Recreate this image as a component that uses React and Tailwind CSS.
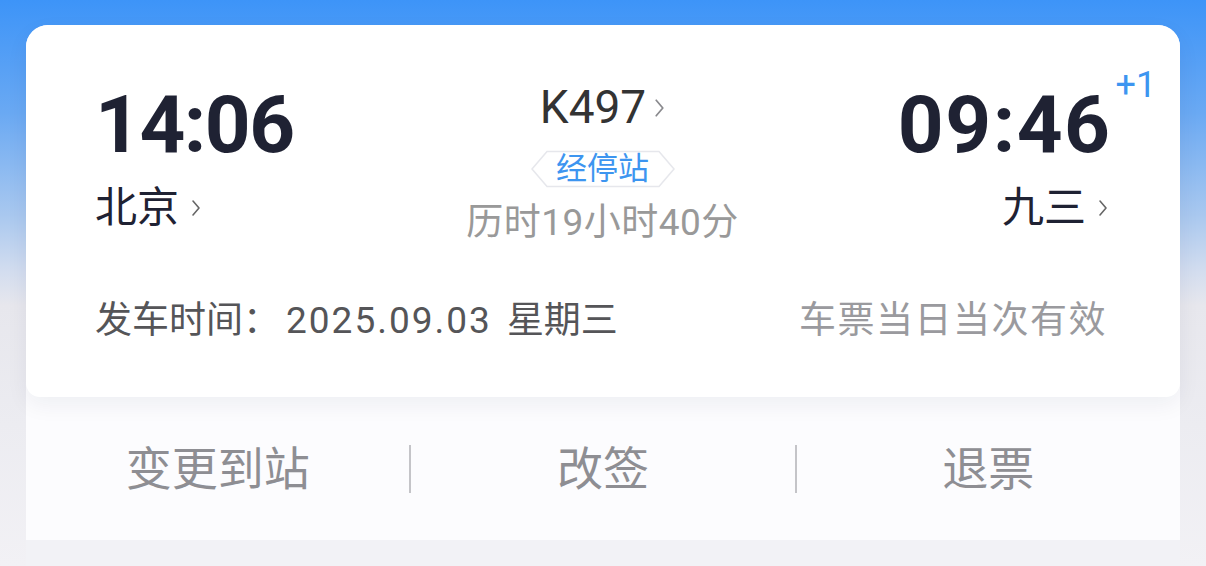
import React from "react";

const Chevron = ({ className = "" }) => (
  <svg viewBox="0 0 10 18" className={className} fill="none">
    <polyline points="2,2 8,9 2,16" stroke="currentColor" strokeWidth="1.6" strokeLinecap="round" strokeLinejoin="round" />
  </svg>
);

const Badge = () => (
  <div className="relative w-[146px] h-[38px] flex items-center justify-center">
    <svg viewBox="0 0 146 38" className="absolute inset-0 w-full h-full">
      <polygon points="17,1.5 129,1.5 144,19 129,36.5 17,36.5 2,19" fill="#ffffff" stroke="#e6e7ec" strokeWidth="1.5" />
    </svg>
    <span className="relative text-[31px] leading-[38px] text-[#3d95f0]">经停站</span>
  </div>
);

export default function App() {
  const font = { fontFamily: 'Roboto, "Noto Sans CJK SC", sans-serif' };
  return (
    <div
      className="w-[1206px] h-[566px] overflow-hidden px-[26px] pt-[25px] bg-[linear-gradient(180deg,#3d94f8_0%,#6aa9f3_20%,#a9c8ef_38%,#d3ddef_48%,#e7e7ed_54%,#ececf1_75%,#f2f1f5_100%)]"
      style={font}
    >
      <div className="rounded-t-[22px] bg-[#fcfcfe]">
        {/* Ticket card */}
        <div className="relative z-10 rounded-t-[22px] rounded-b-[14px] bg-white shadow-[0_8px_22px_rgba(20,30,60,0.06)] pl-[69px] pr-[70px] pt-[60px] pb-[58px]">
          <div className="grid grid-cols-[1fr_auto_1fr] items-start">
            {/* Left */}
            <div className="flex flex-col items-start">
              <div className="text-[80px] leading-[80px] font-bold text-[#1f2233] tracking-[-1.5px]">14:06</div>
              <div className="mt-[22px] flex items-center text-[42px] leading-[42px] text-[#1f2233]">
                <span>北京</span>
                <Chevron className="ml-[12px] w-[10px] h-[18px] text-[#666]" />
              </div>
            </div>
            {/* Center */}
            <div className="flex flex-col items-center">
              <div className="flex items-center text-[46px] leading-[45px] text-[#333333]">
                <span>K497</span>
                <Chevron className="ml-[8px] w-[11px] h-[20px] text-[#8a8a8e]" />
              </div>
              <div className="mt-[20px]">
                <Badge />
              </div>
              <div className="mt-[17px] text-[37px] leading-[36px] text-[#999999] tracking-[0.5px]">历时19小时40分</div>
            </div>
            {/* Right */}
            <div className="flex flex-col items-end">
              <div className="relative text-[80px] leading-[80px] font-bold text-[#1f2233] tracking-[1.5px] mr-[-1.5px]">
                09:46
                <span className="absolute left-full top-[-18px] ml-[4px] text-[36px] leading-[36px] font-normal tracking-normal text-[#3d95f0]">+1</span>
              </div>
              <div className="mt-[22px] flex items-center text-[42px] leading-[42px] text-[#1f2233] mr-[2px]">
                <span>九三</span>
                <Chevron className="ml-[12px] w-[10px] h-[18px] text-[#666]" />
              </div>
            </div>
          </div>
          <div className="mt-[62px] flex items-center justify-between text-[37px] leading-[36px]">
            <div className="flex items-center text-[#555558]">
              <span>发车时间：</span>
              <span className="ml-[6px] tracking-[2px]">2025.09.03</span>
              <span className="ml-[15px]">星期三</span>
            </div>
            <div className="text-[#9a9a9e] tracking-[1.5px] mr-[3px]">车票当日当次有效</div>
          </div>
        </div>
        {/* Actions */}
        <div className="h-[143px] flex items-center text-[46px] leading-[48px] text-[#8e8e93]">
          <div className="flex-1 text-center">变更到站</div>
          <div className="w-[2px] h-[48px] bg-[#c4c4c8]" />
          <div className="flex-1 text-center">改签</div>
          <div className="w-[2px] h-[48px] bg-[#c4c4c8]" />
          <div className="flex-1 text-center">退票</div>
        </div>
      </div>
      <div className="h-[40px] bg-[#f2f2f6]" />
    </div>
  );
}
